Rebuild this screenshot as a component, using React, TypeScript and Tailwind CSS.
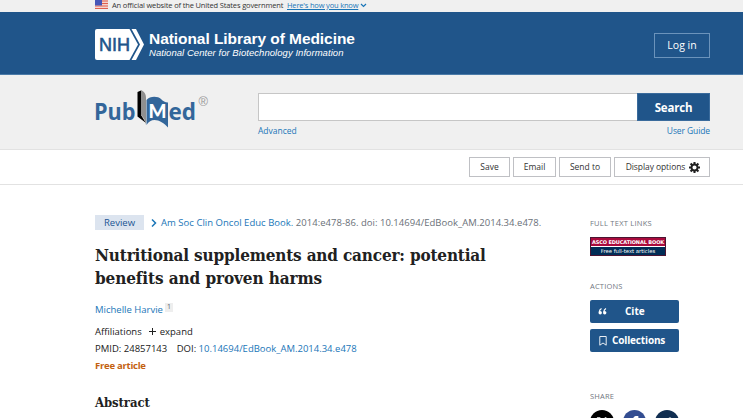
import React from 'react'
import { FaFacebookF, FaLink, FaXTwitter } from 'react-icons/fa6'

const NihLogo = () => (
    <svg width="50" height="31" viewBox="0 0 50 31" className="shrink-0">
        <path d="M2 0H34.5L43 15.5L34.5 31H2Q0 31 0 29V2Q0 0 2 0Z" fill="#fff" />
        <path d="M36.5 0H41L49 15.5L41 31H36.5L45 15.5Z" fill="#fff" />
        <text x="4" y="22" textLength="31" lengthAdjust="spacingAndGlyphs" fontFamily="Liberation Sans, sans-serif" fontSize="19" fill="#20558a" stroke="#20558a" strokeWidth="0.6">NIH</text>
    </svg>
)

const PubMedLogo = () => (
    <svg width="115" height="42" viewBox="0 0 115 42">
        <g fontFamily="Open Sans, sans-serif" fontWeight="700" fill="#33669a">
            <text x="-1" y="31.3" fontSize="24" textLength="41.5" lengthAdjust="spacingAndGlyphs">Pub</text>
            <text x="73.5" y="31.3" fontSize="24" textLength="27.5" lengthAdjust="spacingAndGlyphs">ed</text>
        </g>
        <path d="M42.5 3L46 1.5V26L51 34L42.5 27.5Z" fill="#000" />
        <path d="M46 1C49.500 3 51 5 51 9V36C50.500 32 49 29 46 26Z" fill="#8f8f8f" />
        <path d="M51.500 11C55 6.500 63 7 66 10C68 12 70 13.500 73 13.500V38.500C67 32 57 27 51.500 36Z" fill="#33669a" />
        <text x="53.500" y="29" fontSize="19" fontFamily="Lato, sans-serif" fontWeight="900" fill="#fff" textLength="18" lengthAdjust="spacingAndGlyphs">M</text>
        <text x="103.500" y="17" fontSize="12" fontFamily="Liberation Sans, sans-serif" fill="#999" textLength="9.500" lengthAdjust="spacingAndGlyphs">®</text>
    </svg>
)

const Flag = () => (
    <svg width="13" height="9" viewBox="0 0 13 9">
        <rect width="13" height="9" fill="#f5d5d0" />
        <path d="M0 1H13M0 3.500H13M0 6H13M0 8.500H13" stroke="#e0604f" />
        <rect width="7" height="5.500" fill="#4656b8" />
    </svg>
)

const Gear = () => (
    <svg width="11" height="11" viewBox="0 0 24 24" fill="none" stroke="#212121">
        <circle cx="12" cy="12" r="6.500" strokeWidth="4" />
        <path d="M12 0V5M12 19V24M0 12H5M19 12H24M3.500 3.500L7 7M17 17L20.500 20.500M20.500 3.500L17 7M7 17L3.500 20.500" strokeWidth="4.500" />
    </svg>
)

const toolButton = 'flex h-5 items-center justify-center border border-[#bfc0c4] bg-white'
const shareButton = 'flex size-6 items-center justify-center rounded-full text-[12px]'

const App = () => {
    return (
        <div className="h-[418px] w-full overflow-hidden bg-white font-['Open_Sans',sans-serif] text-[#212121]">
            <div className="flex h-3 items-start bg-[#f0f0f0] pl-[95px] text-[7.500px] leading-[11px] whitespace-nowrap text-[#333]">
                <Flag />
                <span className="ml-1 w-[175px] tracking-[-0.15px]">An official website of the United States government</span>
                <span className="flex items-center text-[#1a76b8]">
                    <span className="tracking-[-0.18px] underline">Here's how you know</span>
                    <svg width="7" height="5" viewBox="0 0 7 5" className="ml-0.5"><path d="M1 1L3.500 3.500L6 1" fill="none" stroke="#1a76b8" strokeWidth="1.200" /></svg>
                </span>
            </div>

            <header className="flex h-[63px] items-center justify-between border-b border-[#4b7ba8] bg-[#20558a] pr-[33px] pl-[95px] pt-0.5 text-white">
                <div className="flex items-center whitespace-nowrap font-['Liberation_Sans',sans-serif]">
                    <NihLogo />
                    <div className="ml-1">
                        <div className="text-[15.500px] leading-[17px] font-bold tracking-[-0.06px]">National Library of Medicine</div>
                        <div className="text-[9.500px] leading-[12px] tracking-[0.05px] italic">National Center for Biotechnology Information</div>
                    </div>
                </div>
                <button className="mt-[3px] h-[25px] w-14 border border-[#6b93bb] text-[10.500px] leading-[23px]">Log in</button>
            </header>

            <section className="flex h-[75px] border-b border-[#e2e2e2] bg-[#f0f0f0] pr-[33px] pl-[95px]">
                <div className="w-[163px] pt-[14px]">
                    <PubMedLogo />
                </div>
                <div className="flex-1 pt-[18px]">
                    <div className="flex h-7">
                        <div className="flex-1 border border-r-0 border-[#c6c6c6] bg-white"></div>
                        <button className="w-[73px] border border-[#3a6b9c] bg-[#20558a] pt-px text-[11.500px] font-bold tracking-[-0.2px] text-white">Search</button>
                    </div>
                    <div className="mt-1 flex justify-between text-[8.500px] leading-3 text-[#1a76b8]">
                        <span>Advanced</span>
                        <span className="tracking-[-0.1px]">User Guide</span>
                    </div>
                </div>
            </section>

            <div className="flex h-[35px] items-center justify-end gap-[3px] border-b border-[#e2e2e2] pr-[33px] text-[8.500px] text-[#333]">
                <button className={`${toolButton} w-[41px]`}>Save</button>
                <button className={`${toolButton} w-[43px]`}>Email</button>
                <button className={`${toolButton} w-[52px]`}>Send to</button>
                <button className={`${toolButton} w-24 gap-1 pl-0.5 tracking-[-0.08px] whitespace-nowrap`}>Display options <Gear /></button>
            </div>

            <div className="flex pt-[29px] pl-[95px]">
                <main className="w-[495px] shrink-0 whitespace-nowrap">
                    <div className="flex h-[17px] items-center text-[9.500px] text-[#6a7078]">
                        <span className="flex h-[15px] w-[49px] items-center justify-center bg-[#dce4ef] pt-px text-[#205493]">Review</span>
                        <svg width="6" height="8" viewBox="0 0 6 8" className="mr-1 ml-[7px]"><path d="M1 0.500L4.500 4L1 7.500" fill="none" stroke="#1a76b8" strokeWidth="1.500" /></svg>
                        <span className="pt-px tracking-[0.025px]"><span className="text-[#1a76b8]">Am Soc Clin Oncol Educ Book.</span> 2014:e478-86. doi: 10.14694/EdBook_AM.2014.34.e478.</span>
                    </div>
                    <h1 className="mt-[13px] font-['DejaVu_Serif_Condensed','DejaVu_Serif',serif] text-[17px] leading-[23px] font-bold tracking-[-0.18px]">
                        Nutritional supplements and cancer: potential<br /><span className="tracking-[-0.1px]">benefits and proven harms</span>
                    </h1>
                    <div className="mt-[13px] flex h-3.5 items-center text-[9.500px] text-[#1a76b8]">
                        Michelle Harvie
                        <sup className="-top-[3px] ml-0.5 flex h-[9px] w-2 items-center justify-center bg-[#eee] text-[7px] text-[#5b616b]">1</sup>
                    </div>
                    <div className="mt-1.5 text-[9.500px] leading-[17px]">
                        <div className="flex items-center">Affiliations
                            <svg width="7" height="7" viewBox="0 0 7 7" className="mr-1 ml-[7px]"><path d="M3.500 0V7M0 3.500H7" stroke="#212121" /></svg>
                            expand
                        </div>
                        <div>PMID: 24857143 <span className="ml-[7px]">DOI: <span className="text-[#1a76b8]">10.14694/EdBook_AM.2014.34.e478</span></span></div>
                        <div className="font-bold tracking-[-0.25px] text-[#c3610f]">Free article</div>
                    </div>
                    <h2 className="mt-[19px] font-['DejaVu_Serif_Condensed','DejaVu_Serif',serif] text-[13px] leading-5 font-bold tracking-[-0.1px]">Abstract</h2>
                </main>

                <aside className="w-[89px] shrink-0 text-[7.500px] whitespace-nowrap text-[#72777f]">
                    <div className="mt-[3px] h-3 leading-3 tracking-[0.25px]">FULL TEXT LINKS</div>
                    <div className="mt-2 w-[76px] border border-[#4a1532] bg-[#002d56] text-center font-['DejaVu_Sans',sans-serif] text-white">
                        <div className="flex h-[9px] justify-center border-b border-white bg-[#aa0a3c] text-[5px] leading-[9px] font-bold tracking-[-0.12px]">ASCO EDUCATIONAL BOOK</div>
                        <div className="h-2 text-[5.300px] leading-2">Free full-text articles</div>
                    </div>
                    <div className="mt-6 h-3 leading-3 tracking-[0.2px]">ACTIONS</div>
                    <button className="mt-2 flex h-[23px] w-full items-center rounded-xs bg-[#20558a] pl-2 text-[10px] font-bold text-white">
                        <svg width="9" height="7" viewBox="0 0 9 7"><path d="M3.500 0.500Q1.500 1.500 1.300 4M8 0.500Q6 1.500 5.800 4" fill="none" stroke="#fff" strokeWidth="1.200" /><circle cx="2.200" cy="4.800" r="1.700" fill="#fff" /><circle cx="6.700" cy="4.800" r="1.700" fill="#fff" /></svg>
                        <span className="ml-[18px]">Cite</span>
                    </button>
                    <button className="mt-1.5 flex h-[23px] w-full items-center rounded-xs bg-[#20558a] pl-[9px] text-[10px] font-bold text-white">
                        <svg width="8" height="10" viewBox="0 0 8 10"><path d="M0.800 0.500H7.200V9.200L4 7L0.800 9.200Z" fill="none" stroke="#fff" strokeWidth="0.900" /></svg>
                        <span className="ml-[5px] tracking-[-0.15px]">Collections</span>
                    </button>
                    <div className="mt-[38px] h-3 leading-3 tracking-[0.2px]">SHARE</div>
                    <div className="mt-2 flex gap-[9px] text-white">
                        <span className={`${shareButton} bg-black`}><FaXTwitter /></span>
                        <span className={`${shareButton} bg-[#334d91]`}><FaFacebookF /></span>
                        <span className={`${shareButton} bg-[#112e51]`}><FaLink /></span>
                    </div>
                </aside>
            </div>
        </div>
    )
}

export default App
